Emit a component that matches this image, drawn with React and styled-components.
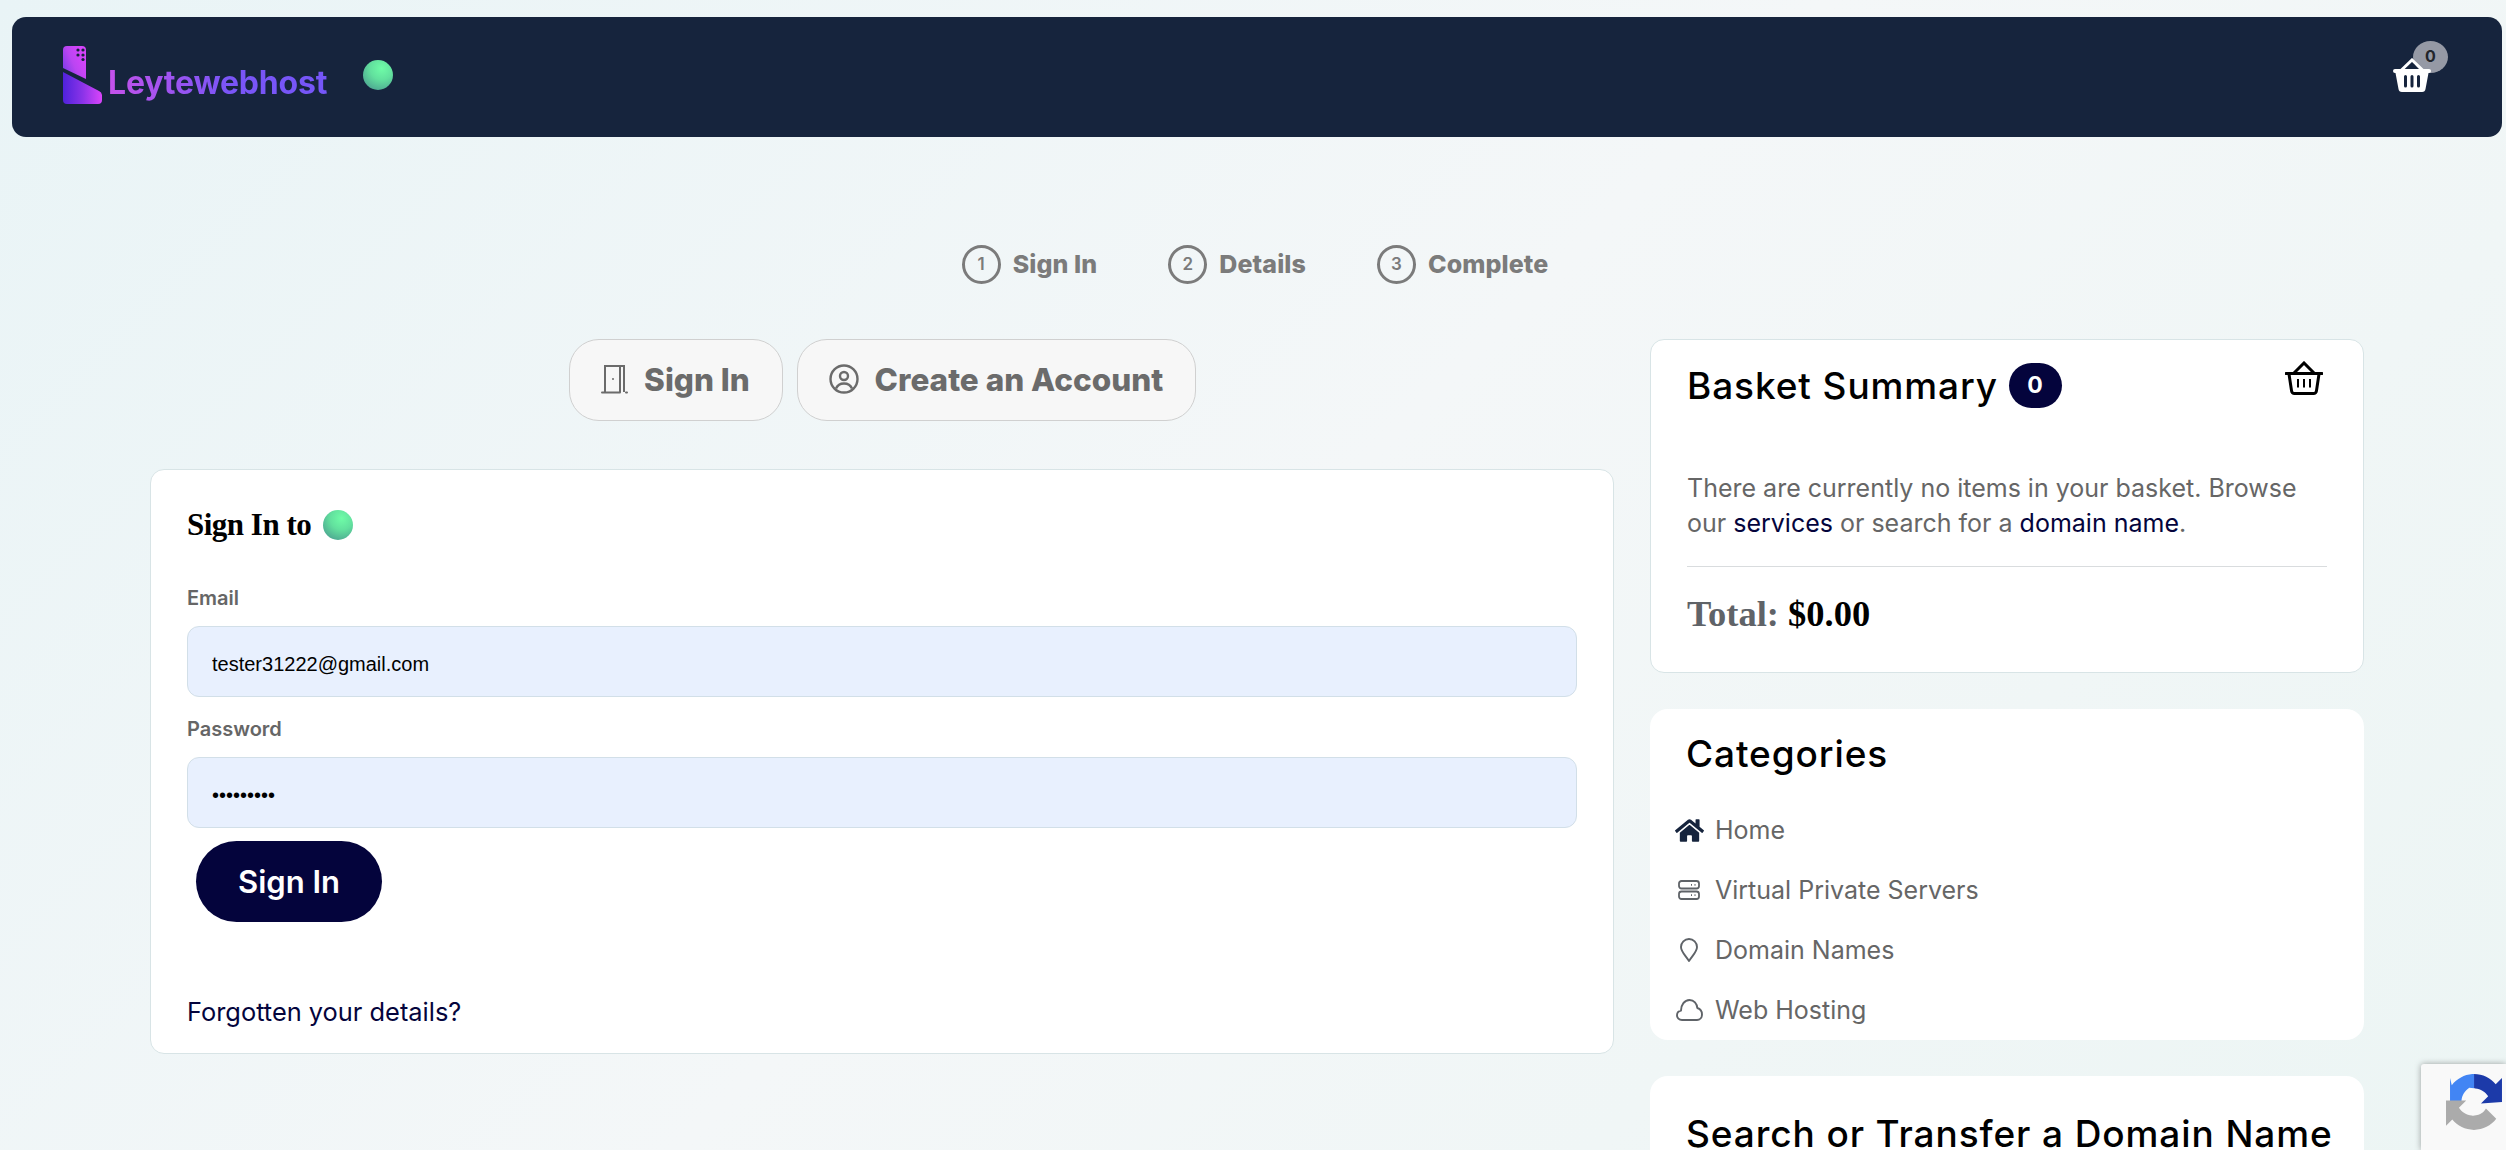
import React from 'react'
import styled, {createGlobalStyle} from 'styled-components'
import {FaHome} from 'react-icons/fa'

const GlobalStyle = createGlobalStyle`
  html, body {
    margin: 0;
    padding: 0;
    height: 1150px;
    overflow: hidden;
  }
  body {
    font-family: Inter, "Noto Sans", sans-serif;
    background: linear-gradient(135deg, #e9f4f6 0%, #f4f7f8 50%, #ecf5f4 100%);
  }
  * {
    box-sizing: border-box;
  }
`

const Page = styled.div`
  position: relative;
  height: 1150px;
  overflow: hidden;
  padding-top: 17px;
`

const Header = styled.header`
  display: flex;
  align-items: center;
  justify-content: space-between;
  height: 120px;
  margin: 0 4px 0 12px;
  padding: 0 71px 0 51px;
  background: #16243d;
  border-radius: 14px;
`

const Brand = styled.div`
  display: flex;
  align-items: flex-end;
  gap: 5px;
  height: 58px;
  margin-bottom: 4px;
`

const BrandName = styled.span`
  font-size: 32px;
  font-weight: 700;
  line-height: 37px;
  letter-spacing: -0.2px;
  margin-bottom: 3px;
  background: linear-gradient(90deg, #c552ea 0%, #7a55f7 55%, #7556f8 100%);
  -webkit-background-clip: text;
  background-clip: text;
  color: transparent;
`

const Ball = styled.span`
  display: inline-block;
  width: ${props => props.size}px;
  height: ${props => props.size}px;
  border-radius: 50%;
  background: radial-gradient(circle at 62% 28%, #6ffca7 0%, #62e09e 40%, #458f8c 100%);
`

const BrandBall = styled(Ball)`
  margin: 0 0 4px 36px;
  align-self: center;
`

const BrandRow = styled.div`
  display: flex;
  align-items: center;
`

const CartLink = styled.div`
  position: relative;
  width: 38px;
  height: 34px;
  margin-top: -5px;
  color: #fff;
`

const CartCount = styled.span`
  position: absolute;
  top: -17px;
  left: 20px;
  width: 35px;
  height: 32px;
  border-radius: 50%;
  background: #9599a5;
  color: #22252b;
  font-size: 16px;
  font-weight: 700;
  line-height: 30px;
  text-align: center;
`

const CartIcon = styled.svg`
  position: relative;
  display: block;
`

const Stepper = styled.ol`
  display: flex;
  justify-content: center;
  gap: 71px;
  list-style: none;
  margin: 108px 0 0 4px;
  padding: 0;
`

const Step = styled.li`
  display: flex;
  align-items: center;
  gap: 12px;
  height: 39px;
  color: #7b7b7b;
  font-size: 25px;
  font-weight: 800;
  line-height: 39px;
  letter-spacing: 0.1px;
`

const StepNumber = styled.span`
  display: flex;
  align-items: center;
  justify-content: center;
  width: 39px;
  height: 39px;
  border: 3px solid #7b7b7b;
  border-radius: 50%;
  font-size: 17px;
  font-weight: 600;
  letter-spacing: 0;
`

const Columns = styled.div`
  display: flex;
  align-items: flex-start;
  gap: 36px;
  margin: 55px 142px 0 150px;
`

const Main = styled.main`
  flex: 1;
  min-width: 0;
`

const Side = styled.aside`
  display: flex;
  flex-direction: column;
  gap: 36px;
  width: 714px;
  flex: none;
`

const Tabs = styled.div`
  display: flex;
  justify-content: center;
  gap: 14px;
`

const Tab = styled.button`
  display: flex;
  align-items: center;
  gap: 16px;
  width: ${props => props.width}px;
  height: 82px;
  padding: 0 0 2px;
  justify-content: center;
  background: #f7f7f7;
  border: 1px solid #d0d0d0;
  border-radius: 30px;
  color: #6b6b6b;
  font-family: inherit;
  font-size: 31.5px;
  font-weight: 800;
`

const Card = styled.section`
  background: #fff;
  border: 1px solid #d8e4e6;
  border-radius: 14px;
`

const SignInCard = styled(Card)`
  margin-top: 48px;
  padding: 38px 36px 23px;
`

const SerifTitle = styled.h3`
  display: flex;
  align-items: center;
  gap: 12px;
  height: 34px;
  margin: 0;
  color: #000;
  font-family: "Liberation Serif", serif;
  font-size: 31px;
  font-weight: 700;
  letter-spacing: -0.5px;
`

const Label = styled.label`
  display: block;
  height: 30px;
  margin-top: ${props => props.top}px;
  color: #666;
  font-size: 20px;
  font-weight: 600;
  line-height: 30px;
`

const Field = styled.input`
  display: block;
  width: 100%;
  height: 71px;
  margin-top: 13px;
  padding: 5px 24px 0;
  background: #e8f0fe;
  border: 1px solid #d2dfe8;
  border-radius: 12px;
  color: #000;
  font-family: "Liberation Sans", Arial, sans-serif;
  font-size: 20px;
  outline: none;
`

const SubmitButton = styled.button`
  display: block;
  width: 186px;
  height: 81px;
  margin: 13px 0 0 9px;
  background: #04043c;
  border: 0;
  border-radius: 41px;
  color: #fff;
  font-family: inherit;
  font-size: 31px;
  font-weight: 600;
`

const Forgot = styled.a`
  display: block;
  margin-top: 72px;
  color: #04043c;
  font-size: 25.4px;
  line-height: 36px;
`

const BasketCard = styled(Card)`
  height: 334px;
  padding: 0 36px 0 36px;
`

const BasketHead = styled.div`
  display: flex;
  align-items: center;
  justify-content: space-between;
  height: 90px;
`

const CardTitle = styled.h2`
  display: flex;
  align-items: center;
  gap: 11px;
  margin: 0;
  color: #000;
  font-size: 37px;
  font-weight: 500;
  letter-spacing: 0.9px;
`

const CountPill = styled.span`
  display: flex;
  align-items: center;
  justify-content: center;
  width: 53px;
  height: 45px;
  background: #04043c;
  border-radius: 23px;
  color: #fff;
  font-size: 23px;
  font-weight: 700;
`

const BasketIcon = styled.svg`
  display: block;
  margin: -14px 4px 0 0;
`

const Notice = styled.p`
  margin: 41px 0 0;
  color: #666;
  font-size: 25px;
  line-height: 35px;
  a {
    color: #04043c;
  }
`

const Divider = styled.hr`
  height: 1px;
  margin: 25px 0 0;
  background: #d9dcde;
  border: 0;
`

const Total = styled.div`
  margin-top: 26px;
  color: #000;
  font-family: "Liberation Serif", serif;
  font-size: 36.5px;
  font-weight: 700;
  line-height: 42px;
  span {
    color: #5f6368;
  }
`

const PlainCard = styled.section`
  background: #fff;
  border-radius: 18px;
`

const CategoriesCard = styled(PlainCard)`
  height: 331px;
  padding: 21px 0 0 24px;
`

const SearchCard = styled(PlainCard)`
  height: 200px;
  padding: 35px 0 0 36px;
`

const CategoryTitle = styled(CardTitle)`
  margin-left: 12px;
  line-height: 48px;
`

const CategoryList = styled.ul`
  margin: 22px 0 0;
  padding: 0;
  list-style: none;
`

const CategoryItem = styled.li`
  display: flex;
  align-items: center;
  height: 60px;
  color: #666;
  font-size: 25px;
`

const CategoryIcon = styled.span`
  display: flex;
  align-items: center;
  justify-content: center;
  width: 30px;
  margin-right: 11px;
  color: ${props => props.color || '#5f6368'};
`

const Recaptcha = styled.div`
  position: absolute;
  right: 0;
  bottom: 0;
  width: 85px;
  height: 86px;
  padding: 10px 0 0 25px;
  background: #f9f9f9;
  border-radius: 3px 0 0 0;
  box-shadow: 0 0 6px rgba(0, 0, 0, 0.35);
`

const Logo = () => (
  <svg width="40" height="58" viewBox="0 0 40 58">
    <defs>
      <linearGradient id="logoTop" x1="0" y1="0.7" x2="0.8" y2="0.2">
        <stop offset="0" stopColor="#7f3ce6" />
        <stop offset="0.5" stopColor="#bb45f2" />
        <stop offset="1" stopColor="#d444fa" />
      </linearGradient>
      <linearGradient id="logoBottom" x1="0" y1="0.7" x2="1" y2="0.7">
        <stop offset="0" stopColor="#4f22dc" />
        <stop offset="0.5" stopColor="#8a33e8" />
        <stop offset="1" stopColor="#da45fa" />
      </linearGradient>
    </defs>
    <path d="M4 0H19a4 4 0 0 1 4 4V33L0 22V4a4 4 0 0 1 4-4Z" fill="url(#logoTop)" />
    <path d="M0 26L36 45a5 5 0 0 1 3 4V54a4 4 0 0 1-4 4H4a4 4 0 0 1-4-4Z" fill="url(#logoBottom)" />
    <g fill="#16243d">
      <circle cx="15" cy="4" r="1.6" />
      <circle cx="20" cy="4" r="1.6" />
      <circle cx="15" cy="9" r="1.6" />
      <circle cx="20" cy="9" r="1.6" />
      <circle cx="20" cy="13.5" r="1.6" />
    </g>
  </svg>
)

const SolidBasket = () => (
  <CartIcon width="38" height="34" viewBox="0 0 38 34">
    <path d="M8 12.5L19 2L30 12.5" fill="none" stroke="#fff" strokeWidth="3" />
    <path
      fillRule="evenodd"
      fill="#fff"
      d="M2 11H36a2 2 0 0 1 0 4H35.5L32.5 31a3.5 3.5 0 0 1-3.5 3H9a3.5 3.5 0 0 1-3.5-3L2.5 15H2a2 2 0 0 1 0-4ZM11 18.5V28a1.5 1.5 0 0 0 3 0V18.5a1.5 1.5 0 0 0-3 0ZM17.5 18.5V28a1.5 1.5 0 0 0 3 0V18.5a1.5 1.5 0 0 0-3 0ZM24 18.5V28a1.5 1.5 0 0 0 3 0V18.5a1.5 1.5 0 0 0-3 0Z"
    />
  </CartIcon>
)

const OutlineBasket = () => (
  <BasketIcon width="38" height="34" viewBox="0 0 38 34" fill="none" stroke="#000" strokeWidth="3">
    <path d="M9 12L19 2L29 12" />
    <path d="M1 12.5H37" strokeLinecap="round" />
    <path d="M4 13L6.5 29.5a3 3 0 0 0 3 3H28.5a3 3 0 0 0 3-3L34 13" />
    <path d="M13 18V26.5M19 18V26.5M25 18V26.5" strokeWidth="2" />
  </BasketIcon>
)

const DoorIcon = () => (
  <svg width="27" height="30" viewBox="0 0 27 30" fill="none" stroke="#6b6b6b" strokeWidth="2">
    <path d="M1 28.5H19M25 28.5H26" strokeLinecap="round" />
    <path d="M4 28V2H19V28" />
    <path d="M19 2H23V28" />
    <circle cx="12" cy="15" r="1" fill="#6b6b6b" stroke="none" />
  </svg>
)

const UserIcon = () => (
  <svg width="30" height="30" viewBox="0 0 30 30" fill="none" stroke="#6b6b6b" strokeWidth="2.4">
    <circle cx="15" cy="15" r="13.5" />
    <circle cx="15" cy="12" r="4" />
    <path d="M7 24.5C8.5 21 11 19.5 15 19.5S21.5 21 23 24.5" />
  </svg>
)

const ServerIcon = () => (
  <svg width="22" height="20" viewBox="0 0 22 20" fill="none" stroke="#5f6368" strokeWidth="1.8">
    <rect x="1" y="1" width="20" height="7.5" rx="2.5" />
    <rect x="1" y="11.5" width="20" height="7.5" rx="2.5" />
    <path d="M13 4.8H14M16.5 4.8H17.5M13 15.2H14M16.5 15.2H17.5" />
  </svg>
)

const PinIcon = () => (
  <svg width="18" height="24" viewBox="0 0 18 24" fill="none" stroke="#5f6368" strokeWidth="1.9">
    <path d="M9 23C5 17 1 13.5 1 9a8 8 0 0 1 16 0C17 13.5 13 17 9 23Z" strokeLinejoin="round" />
  </svg>
)

const CloudIcon = () => (
  <svg width="27" height="22" viewBox="0 0 27 22" fill="none" stroke="#5f6368" strokeWidth="1.9">
    <path d="M6 21C3 21 1 18.800 1 16.200C1 13.800 2.800 12 5 11.600C5 6 8.500 1 13.500 1C18 1 21 4.500 21.300 9C24 9.800 26 12.400 26 15.500C26 18.700 23.800 21 21 21Z" strokeLinejoin="round" />
  </svg>
)

const RecaptchaLogo = () => (
  <svg width="56" height="56" viewBox="0 0 64 64">
    <path d="M64 31.955l-.033-1.37V4.687l-7.16 7.16C50.948 4.674 42.033.093 32.05.093v16.15c.605 0 1.072.07 1.416.203 6.2.49 11.59 3.914 14.76 8.89l-8.306 8.306 24.08-1.687" fill="#1c3aa9" />
    <path d="M31.875 0l-1.37.033H30c-9 .8-17.6 5.300-23.400 12.700L4.600 4.600V32H17.500c0-.605.07-1.072.203-1.416.49-6.200 3.914-11.590 8.890-14.760L32 16.200V0" fill="#4285f4" />
    <path d="M0 32l.033 1.370v25.900l7.160-7.160c5.860 7.170 14.775 11.750 24.760 11.750 10.400 0 19.622-4.960 25.458-12.640L45.675 39.360c-1.150 2.127-2.784 3.955-4.762 5.330-2.050 1.600-4.952 2.908-9.960 2.908-.605 0-1.072-.07-1.416-.203-6.200-.49-11.590-3.914-14.760-8.890l8.306-8.306H0" fill="#ababab" />
  </svg>
)

const categories = [
  {name: 'Home', icon: <FaHome size={29} />, color: '#16243d'},
  {name: 'Virtual Private Servers', icon: <ServerIcon />},
  {name: 'Domain Names', icon: <PinIcon />},
  {name: 'Web Hosting', icon: <CloudIcon />},
]

const steps = ['Sign In', 'Details', 'Complete']

const App = () => (
  <Page>
    <GlobalStyle />
    <Header>
      <BrandRow>
        <Brand>
          <Logo />
          <BrandName>Leytewebhost</BrandName>
        </Brand>
        <BrandBall size={30} />
      </BrandRow>
      <CartLink>
        <CartCount>0</CartCount>
        <SolidBasket />
      </CartLink>
    </Header>

    <Stepper>
      {steps.map((step, idx) => (
        <Step key={step}>
          <StepNumber>{idx + 1}</StepNumber>
          {step}
        </Step>
      ))}
    </Stepper>

    <Columns>
      <Main>
        <Tabs>
          <Tab width={214}>
            <DoorIcon />
            Sign In
          </Tab>
          <Tab width={399}>
            <UserIcon />
            Create an Account
          </Tab>
        </Tabs>
        <SignInCard>
          <SerifTitle>
            Sign In to <Ball size={30} />
          </SerifTitle>
          <Label top={41}>Email</Label>
          <Field type="text" readOnly value="tester31222@gmail.com" />
          <Label top={17}>Password</Label>
          <Field type="password" readOnly value="123456789" />
          <SubmitButton>Sign In</SubmitButton>
          <Forgot>Forgotten your details?</Forgot>
        </SignInCard>
      </Main>

      <Side>
        <BasketCard>
          <BasketHead>
            <CardTitle>
              Basket Summary <CountPill>0</CountPill>
            </CardTitle>
            <OutlineBasket />
          </BasketHead>
          <Notice>
            There are currently no items in your basket. Browse our <a>services</a> or search
            for a <a>domain name</a>.
          </Notice>
          <Divider />
          <Total>
            <span>Total:</span> $0.00
          </Total>
        </BasketCard>

        <CategoriesCard>
          <CategoryTitle>Categories</CategoryTitle>
          <CategoryList>
            {categories.map(item => (
              <CategoryItem key={item.name}>
                <CategoryIcon color={item.color}>{item.icon}</CategoryIcon>
                {item.name}
              </CategoryItem>
            ))}
          </CategoryList>
        </CategoriesCard>

        <SearchCard>
          <CardTitle>Search or Transfer a Domain Name</CardTitle>
        </SearchCard>
      </Side>
    </Columns>

    <Recaptcha>
      <RecaptchaLogo />
    </Recaptcha>
  </Page>
)

export default App
